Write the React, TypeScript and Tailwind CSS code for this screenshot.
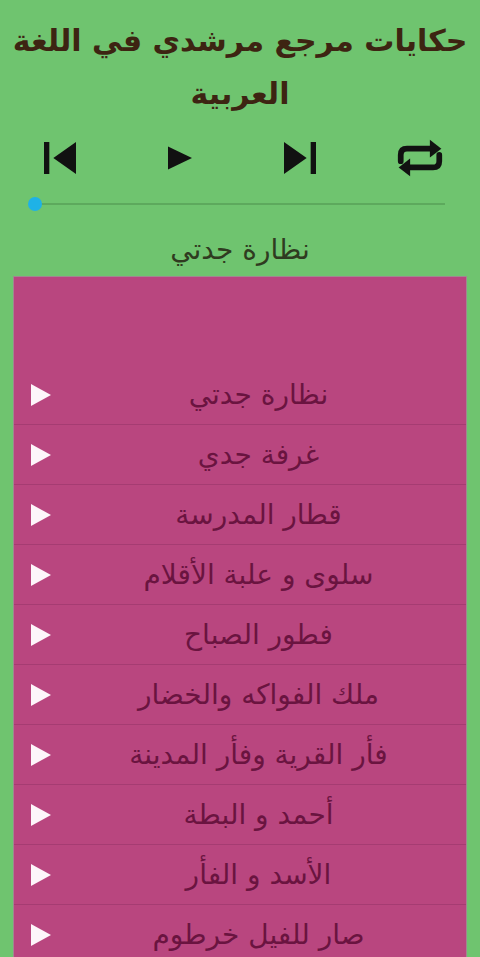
const tracks = [
  "نظارة جدتي",
  "غرفة جدي",
  "قطار المدرسة",
  "سلوى و علبة الأقلام",
  "فطور الصباح",
  "ملك الفواكه والخضار",
  "فأر القرية وفأر المدينة",
  "أحمد و البطة",
  "الأسد و الفأر",
  "صار للفيل خرطوم",
];

function PrevIcon() {
  return (
    <svg width="64" height="64" viewBox="0 0 24 24" fill="#111">
      <path d="M6 6h2v12H6zm3.5 6l8.5 6V6z" />
    </svg>
  );
}

function NextIcon() {
  return (
    <svg width="64" height="64" viewBox="0 0 24 24" fill="#111">
      <path d="M6 18l8.5-6L6 6v12zM16 6v12h2V6h-2z" />
    </svg>
  );
}

function PlayIcon() {
  return (
    <svg width="26" height="26" viewBox="0 0 26 26" fill="#111">
      <path d="M1 1.5L25 13 1 24.5z" />
    </svg>
  );
}

function RepeatIcon() {
  return (
    <svg width="50" height="42" viewBox="0 0 48 40" fill="none">
      <path d="M5.5 23V17Q5.5 11 11.5 11H36" stroke="#111" strokeWidth="5.5" strokeLinecap="round" />
      <path d="M33.5 2.5L44.5 11 33.5 19.5z" fill="#111" />
      <path d="M42.5 17V23Q42.5 29 36.5 29H12" stroke="#111" strokeWidth="5.5" strokeLinecap="round" />
      <path d="M14.5 20.5L3.5 29 14.5 37.5z" fill="#111" />
    </svg>
  );
}

function Row({ title }: { title: string }) {
  return (
    <div className="h-[60px] flex items-center border-b border-[#a53c72] pl-[17px]">
      <svg width="20" height="22" viewBox="0 0 20 22" className="shrink-0">
        <path d="M0 0L20 11 0 22z" fill="#fdf6fa" />
      </svg>
      <div dir="rtl" className="flex-1 text-center text-[28px] leading-none text-[#6a1440]">
        {title}
      </div>
    </div>
  );
}

export default function App() {
  return (
    <div
      className="w-[480px] h-[957px] overflow-hidden bg-[#6fc46f]"
      style={{ fontFamily: '"DejaVu Sans", "Noto Sans", sans-serif' }}
    >
      <h1 dir="rtl" className="pt-[14px] text-center font-bold text-[30px] leading-[53px] text-[#3d2412]">
        حكايات مرجع مرشدي في اللغة العربية
      </h1>

      <div className="grid grid-cols-4 h-[64px] mt-[6px] items-center justify-items-center">
        <PrevIcon />
        <PlayIcon />
        <NextIcon />
        <RepeatIcon />
      </div>

      <div className="relative h-[14px] mt-[7px] mx-[35px]">
        <div className="absolute left-0 right-0 top-[6px] h-[2px] bg-[#5da95d]" />
        <div className="absolute left-[-7px] top-0 w-[14px] h-[14px] rounded-full bg-[#1fb2e6]" />
      </div>

      <div dir="rtl" className="mt-[21px] h-[36px] flex items-center justify-center text-[28px] text-[#2f3b20]">
        نظارة جدتي
      </div>

      <div className="mt-[8px] mx-[13px] bg-[#b9467f] border border-[#a08890]">
        <div className="h-[88px]" />
        {tracks.map((t) => (
          <Row key={t} title={t} />
        ))}
      </div>
    </div>
  );
}
